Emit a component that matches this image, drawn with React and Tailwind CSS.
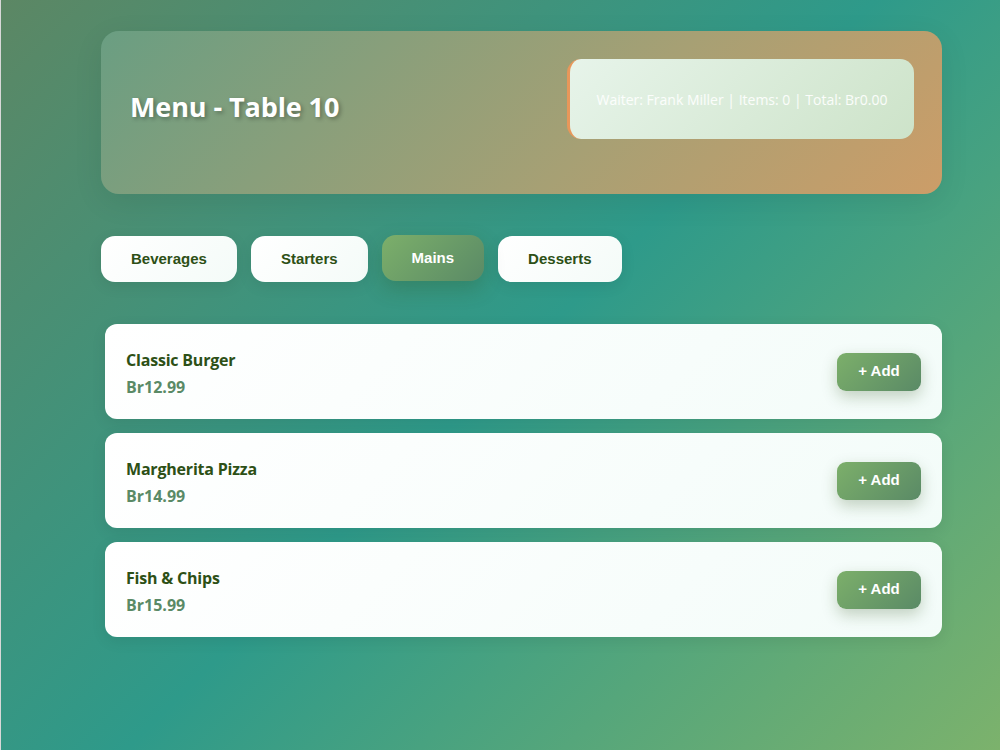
import React, { useState } from "react";

const categories = ["Beverages", "Starters", "Mains", "Desserts"];

const items = [
  { name: "Classic Burger", price: 12.99 },
  { name: "Margherita Pizza", price: 14.99 },
  { name: "Fish & Chips", price: 15.99 },
];

const tabFont = { fontFamily: '"Liberation Sans", Arial, sans-serif' };

export default function App() {
  const [active, setActive] = useState("Mains");

  return (
    <div
      className="min-h-[750px] w-full bg-[linear-gradient(135deg,#5c8764_0%,#2e9a8a_50%,#7cb26c_100%)] border-l border-[#d8d8d8] pt-[31px] pb-10"
      style={{ fontFamily: '"Open Sans", "Noto Sans", sans-serif' }}
    >
      <div className="w-[841px] ml-[100px]">
        <div className="flex items-start justify-between rounded-[18px] bg-[linear-gradient(135deg,#6a9e82_0%,#a7a074_60%,#cc9d68_100%)] h-[163px] pl-[29px] pr-[28px] pt-[28px] shadow-[0_8px_30px_rgba(0,0,0,0.08)]">
          <h1 className="mt-[30px] text-[27px] leading-[36px] font-bold text-white [text-shadow:2px_2px_4px_rgba(0,0,0,0.3)] tracking-[-0.1px]">
            Menu - Table 10
          </h1>
          <div className="w-[347px] h-[80px] flex items-center justify-center rounded-[14px] border-l-[3px] border-[#e8975a] bg-[linear-gradient(135deg,#e7f4ea_0%,#cde3c9_100%)] text-[14px] text-white/90">
            Waiter: Frank Miller | Items: 0 | Total: Br0.00
          </div>
        </div>

        <div className="flex gap-[14px] mt-[42px]" style={tabFont}>
          {categories.map((c) =>
            c === active ? (
              <button
                key={c}
                onClick={() => setActive(c)}
                className="h-[46px] px-[30px] -translate-y-px rounded-[14px] bg-[linear-gradient(135deg,#7caf6a_0%,#5a8a66_100%)] text-white text-[15px] font-bold shadow-[0_8px_20px_rgba(45,80,22,0.25)]"
              >
                {c}
              </button>
            ) : (
              <button
                key={c}
                onClick={() => setActive(c)}
                className="h-[46px] px-[30px] rounded-[14px] bg-[linear-gradient(135deg,#ffffff_0%,#f4fbf8_100%)] text-[#2d5016] text-[15px] font-bold shadow-[0_4px_15px_rgba(0,0,0,0.08)]"
              >
                {c}
              </button>
            )
          )}
        </div>

        <div className="flex flex-col gap-[14px] mt-[42px] pl-[4px]">
          {items.map((it) => (
            <div
              key={it.name}
              className="h-[95px] flex items-center justify-between pl-[21px] pr-[21px] pt-[3px] rounded-[12px] bg-[linear-gradient(135deg,#ffffff_0%,#f3fcf9_100%)] shadow-[0_4px_15px_rgba(0,0,0,0.08)]"
            >
              <div className="flex flex-col gap-[5px]">
                <div className="text-[16px] font-bold text-[#2d5016] leading-[22px] tracking-[-0.2px]">
                  {it.name}
                </div>
                <div className="text-[16px] font-bold text-[#5a8a66] leading-[22px]">
                  Br{it.price.toFixed(2)}
                </div>
              </div>
              <button
                className="-mt-[3px] w-[84px] h-[38px] rounded-[9px] bg-[linear-gradient(135deg,#7caf6a_0%,#5a8a66_100%)] text-white text-[15px] font-bold shadow-[0_6px_15px_rgba(45,80,22,0.25)]"
                style={tabFont}
              >
                + Add
              </button>
            </div>
          ))}
        </div>
      </div>
    </div>
  );
}
